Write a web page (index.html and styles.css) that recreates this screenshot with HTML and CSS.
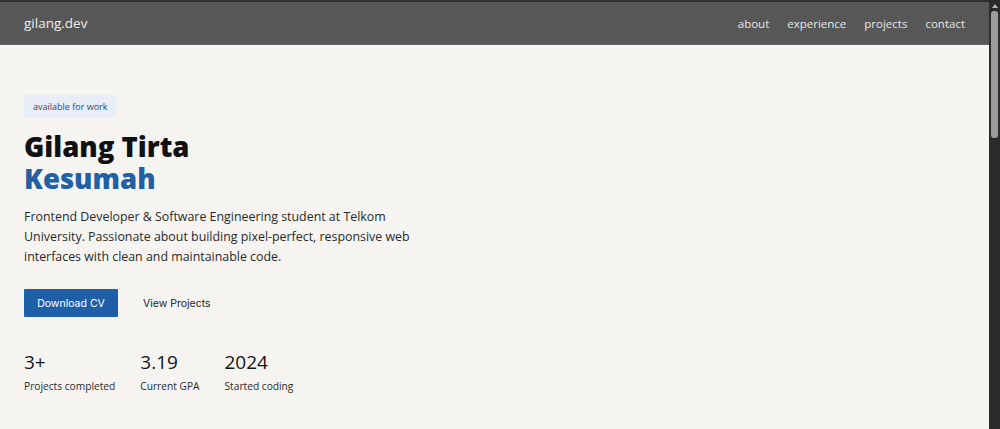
FILE: index.html
```html
<!DOCTYPE html>
<html lang="en">
<head>
<meta charset="utf-8">
<title>gilang.dev</title>
<link rel="stylesheet" href="styles.css">
</head>
<body>
<div class="page">
<header class="nav">
  <a class="logo" href="#">gilang.dev</a>
  <nav class="links">
    <a href="#about">about</a>
    <a href="#experience">experience</a>
    <a href="#projects">projects</a>
    <a href="#contact">contact</a>
  </nav>
</header>
<main>
  <section class="hero">
    <span class="badge">available for work</span>
    <h1 class="title">Gilang Tirta<br><span class="accent">Kesumah</span></h1>
    <p class="intro">Frontend Developer &amp; Software Engineering student at Telkom University. Passionate about building pixel-perfect, responsive web interfaces with clean and maintainable code.</p>
    <div class="actions">
      <a class="btn btn-primary" href="#">Download CV</a>
      <a class="btn btn-ghost" href="#projects">View Projects</a>
    </div>
    <div class="stats">
      <div class="stat"><div class="num">3+</div><div class="label">Projects completed</div></div>
      <div class="stat"><div class="num">3.19</div><div class="label">Current GPA</div></div>
      <div class="stat"><div class="num">2024</div><div class="label">Started coding</div></div>
    </div>
  </section>
</main>
</div>
<aside class="scrollbar" aria-hidden="true">
  <span class="arrow"></span>
  <span class="thumb"></span>
</aside>
</body>
</html>
```
FILE: styles.css
```css
html, body {
  margin: 0;
  height: 100%;
  overflow: hidden;
}
body {
  display: flex;
  font-family: "Open Sans", "DejaVu Sans", sans-serif;
  color: #1a1a1a;
  background: #2b2b2b;
}
.page {
  flex: 1;
  min-width: 0;
  height: 100vh;
  overflow: hidden;
  background: #f5f4f1;
}
.scrollbar {
  width: 11px;
  flex: none;
  display: flex;
  flex-direction: column;
  align-items: center;
  background: #2b2b2b;
}
.arrow {
  width: 0;
  height: 0;
  margin-top: 4px;
  border-left: 3px solid transparent;
  border-right: 3px solid transparent;
  border-bottom: 4px solid #b5b5b5;
}
.thumb {
  width: 7px;
  height: 127px;
  margin-top: 3px;
  border-radius: 3px;
  background: #9c9c9c;
}
a { text-decoration: none; }
.nav {
  display: flex;
  align-items: center;
  justify-content: space-between;
  height: 42px;
  padding: 0 24px;
  background: #575757;
  border-top: 2px solid #2f2f2f;
  border-bottom: 1px solid #6a6a6a;
}
.logo {
  color: #eeeeee;
  font-size: 13.5px;
}
.links {
  display: flex;
  gap: 18px;
}
.links a {
  color: #e6e6e6;
  font-size: 11.5px;
}
.hero {
  padding: 48px 24px 0;
}
.badge {
  display: inline-block;
  background: #e7eef8;
  color: #3a4660;
  font-size: 9px;
  padding: 5px 9px 5px;
  border-radius: 3px;
}
.title {
  margin: 13px 0 0;
  font-weight: 800;
  font-size: 27.5px;
  line-height: 32px;
  color: #111111;
}
.accent {
  color: #2260a5;
}
.intro {
  margin: 12px 0 0;
  max-width: 420px;
  font-size: 12.4px;
  line-height: 20px;
  color: #2a2a2a;
}
.actions {
  display: flex;
  align-items: center;
  gap: 25px;
  margin-top: 22px;
}
.btn {
  font-family: "Inter", "Roboto", sans-serif;
  font-size: 10.5px;
}
.btn-primary {
  display: inline-flex;
  align-items: center;
  justify-content: center;
  width: 94px;
  height: 28px;
  background: #1f5fa7;
  color: #ffffff;
  border-radius: 1px;
}
.btn-ghost {
  color: #1e1e1e;
}
.stats {
  display: flex;
  gap: 25px;
  margin-top: 33px;
}
.stat .num {
  font-size: 19px;
  font-weight: 500;
  line-height: 24px;
  color: #141414;
}
.stat .label {
  margin-top: 5px;
  font-size: 10.2px;
  color: #2a2a2a;
}
```
